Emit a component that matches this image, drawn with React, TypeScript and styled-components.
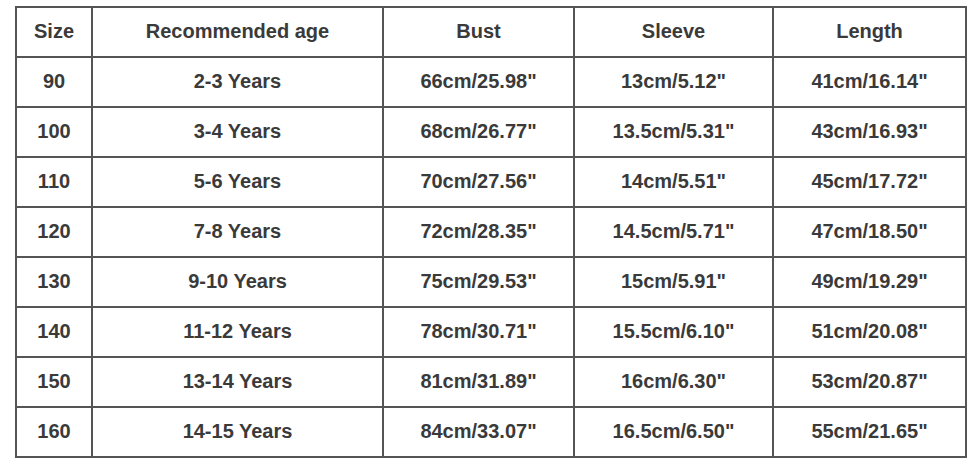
import React from 'react';
import styled, { createGlobalStyle } from 'styled-components';

const rows = [
  ['90', '2-3 Years', '66cm/25.98"', '13cm/5.12"', '41cm/16.14"'],
  ['100', '3-4 Years', '68cm/26.77"', '13.5cm/5.31"', '43cm/16.93"'],
  ['110', '5-6 Years', '70cm/27.56"', '14cm/5.51"', '45cm/17.72"'],
  ['120', '7-8 Years', '72cm/28.35"', '14.5cm/5.71"', '47cm/18.50"'],
  ['130', '9-10 Years', '75cm/29.53"', '15cm/5.91"', '49cm/19.29"'],
  ['140', '11-12 Years', '78cm/30.71"', '15.5cm/6.10"', '51cm/20.08"'],
  ['150', '13-14 Years', '81cm/31.89"', '16cm/6.30"', '53cm/20.87"'],
  ['160', '14-15 Years', '84cm/33.07"', '16.5cm/6.50"', '55cm/21.65"'],
];

const headers = ['Size', 'Recommended age', 'Bust', 'Sleeve', 'Length'];
const widths = [76, 291, 191, 199, 193];

export default function App() {
  return (
    <>
      <GlobalStyle />
      <Page>
        <SizeTable>
          <colgroup>
            {widths.map((w, i) => (
              <col key={i} style={{ width: w }} />
            ))}
          </colgroup>
          <thead>
            <tr>
              {headers.map((h) => (
                <HeadCell key={h}>{h}</HeadCell>
              ))}
            </tr>
          </thead>
          <tbody>
            {rows.map((r) => (
              <tr key={r[0]}>
                {r.map((c, i) => (
                  <Cell key={i}>{c}</Cell>
                ))}
              </tr>
            ))}
          </tbody>
        </SizeTable>
      </Page>
    </>
  );
}

const GlobalStyle = createGlobalStyle`
  body {
    margin: 0;
    background: #fff;
    font-family: "Liberation Sans", Arial, sans-serif;
  }
`;

const Page = styled.div`
  padding: 6px 0 0 15px;
`;

const SizeTable = styled.table`
  border-collapse: collapse;
  table-layout: fixed;
  width: 950px;
  border: 2px solid #555;
`;

const HeadCell = styled.th`
  height: 46px;
  padding: 0 0 2px;
  border: 2px solid #555;
  text-align: center;
  vertical-align: middle;
  font-size: 20px;
  font-weight: 700;
  color: #3a3a3a;
`;

const Cell = styled.td`
  height: 46px;
  padding: 0 0 2px;
  border: 2px solid #555;
  text-align: center;
  vertical-align: middle;
  font-size: 20px;
  font-weight: 700;
  color: #3a3a3a;
`;
